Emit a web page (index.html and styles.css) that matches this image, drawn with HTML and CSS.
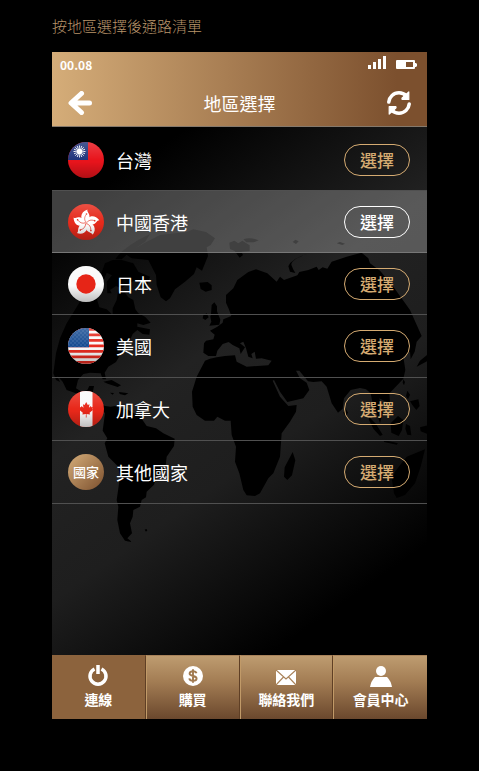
FILE: index.html
```html
<!DOCTYPE html>
<html lang="zh-Hant">
<head>
<meta charset="utf-8">
<meta name="viewport" content="width=device-width, initial-scale=1">
<title>地區選擇</title>
<link rel="stylesheet" href="styles.css">
</head>
<body>
<p class="caption">按地區選擇後通路清單</p>
<div class="phone">
  <header class="header">
    <div class="status">
      <span class="time">00.08</span>
      <svg class="signal" width="19" height="14" viewBox="0 0 19 14" fill="#fff" aria-hidden="true"><path d="M0 9h3v4H0zM5 6h3v7H5zM10 3h3v10h-3zM15 0h3v13h-3z"/></svg>
      <svg class="battery" width="21" height="10" viewBox="0 0 21 10" aria-hidden="true"><path d="M1 0h17q1 0 1 1v2h1l1 1v2l-1 1h-1v1q0 1-1 1H1Q0 9 0 8V1Q0 0 1 0zM10 2v5h7V2z" fill="#fff" fill-rule="evenodd"/></svg>
    </div>
    <div class="titlebar">
      <button class="icon-button" type="button" aria-label="返回">
        <svg width="24" height="24" viewBox="0 0 24 24" fill="none" stroke="#fff" stroke-width="5" stroke-linecap="round" stroke-linejoin="round"><path d="M13.500 2.500L3 12l10.500 9.500M4 12h17.500"/></svg>
      </button>
      <h1>地區選擇</h1>
      <button class="icon-button" type="button" aria-label="重新整理">
        <svg width="24" height="24" viewBox="0 0 24 24" fill="none" stroke="#fff" stroke-width="3.500" stroke-linecap="round"><path d="M1.800 11C2.300 5.800 6.500 1.800 12 1.800c3 0 5.500 1.200 7.500 3.200M22.200 13C21.700 18.200 17.500 22.200 12 22.200c-3 0-5.500-1.200-7.500-3.200"/><path d="M21.800 1v7.500h-6.600q-.8-1.500 1-2.500zM2.200 23v-7.500h6.600q.8 1.500-1 2.500z" fill="#fff" stroke-width="1.200" stroke-linejoin="round"/></svg>
      </button>
    </div>
  </header>

  <main class="content">
    <svg class="map" viewBox="0 0 1125 1584" aria-hidden="true">
      <g transform="translate(-6 249)">
        <path d="M10 490L18 430 30 385 50 340 88 278 115 235 150 200 165 160 188 150 215 150 250 160 265 185 300 200 288 235 260 210 235 220 215 235 198 228 180 240 185 250 172 250 170 215 186 196 170 188 150 240 140 265 148 292 170 298 188 315 188 295 200 270 204 245 225 248 235 262 250 270 256 298 265 310 285 320 302 338 280 345 262 340 262 350 300 358 298 374 278 372 262 360 248 372 236 400 212 432 198 456 175 470 164 488 168 508 158 508 152 490 120 488 100 492 84 510 78 535 95 545 112 540 118 528 132 528 128 548 145 556 150 580 165 588 182 590 195 588 235 600 272 622 290 648 318 655 340 670 374 686 372 708 350 740 346 775 320 800 312 824 290 845 288 862 275 870 270 890 250 900 248 920 240 940 246 970 232 985 246 996 225 992 210 970 202 930 205 890 200 870 210 800 205 770 175 740 164 700 172 685 158 662 165 610 150 590 125 560 95 556 50 540 38 515 22 498 30 516 18 510Z"/>
        <path d="M196 148Q220 110 300 72L285 95 240 125 215 148ZM226 132L285 98 330 75 410 66 430 58 468 66 495 85 482 105 470 112 474 138 456 182 440 172 432 192 405 215 375 238 360 265 348 274 332 262 320 225 318 195 295 150 245 145Z"/>
        <path d="M160 515l25-5 28 16-10 5-30-10zM207 546l28 4-10 6-16-4zM284 959l5-2 3 4-4 4zM180 548l12 1-4 5z"/>
      </g>
      <g transform="translate(384 249)">
        <path d="M75 452Q100 440 165 436L170 455 200 470 265 466 275 452 245 445 228 446 224 425 214 432 218 445 205 440 198 415 190 395 180 400 195 412 182 432 178 415 158 405 146 396 128 402 112 422 108 438 85 438 70 428 72 400 78 392 100 388 104 374 90 362 112 350 128 338 130 328 154 318 146 296 138 278 138 255 160 235 172 210 205 186 228 178 262 190 290 215 300 200 312 210 352 196 358 186 385 180 410 170 416 180 428 172 442 176 455 155 500 140 545 128 565 145 570 160 600 182 640 230 690 300 725 378 710 395 704 425 692 448 690 425 670 440 676 480 670 506 640 538 628 550 630 580 612 572 598 565 608 610 600 640 590 610 580 590 572 550 558 538 540 534 512 540 492 565 488 596 474 608 455 580 440 530 425 514 400 516 384 514 358 482 348 482 360 505 380 518 388 540 370 565 322 576 300 545 282 510 278 512 300 560 325 588 350 585 348 605 330 635 305 670 300 740 280 790 265 805 240 850 225 858 200 856 190 840 178 790 165 755 168 710 155 675 152 632 135 632 112 620 102 632 75 632 50 615 38 590 36 545 50 500Z"/>
        <path d="M95 285l8-8 8 12v15l10 25-3 15-30 3 6-12-3-15 2-8zM70 316l10-6 6 12-10 8-8-5zM58 218l25-2 12 10v14l-18 5-15-8zM148 98l15-6 12 8 12-8 22 14v17l-25 2 5 10-10 8-15-20-14-6zM190 88q20-8 46 3l-15 6h-22zM338 96l8-7 10 5-8 8zM470 100l10-4 15 5-8 4zM382 132q-48 16-48 32 5 15 12 25l-16-4-5-16q10-24 57-37zM338 726l8 25-10 45-14 14-10-10 2-28zM498 598l6 10-8 10-6-10zM710 470l10-18 25-20v20zM670 508l5 8-3 10-4-8zM682 542l8 12-6 14-6-10zM690 574l25-6 4 20-10 12-12-15zM568 622l20 20 20 32-8 4-20-22-14-28zM632 640l22-22 16 12-4 30-10 18-22-10zM678 642l12 6 4 28-12-2-6-18zM612 690l42 10-4 4-38-8zM720 652l22-6v26l-20-8zM735 718L680 740 645 785 636 810 642 850 650 864 675 855 705 820 722 770Z"/>
      </g>
    </svg>

    <svg class="defs" width="0" height="0" aria-hidden="true">
      <defs>
        <clipPath id="round"><circle cx="18" cy="18" r="18"/></clipPath>
        <linearGradient id="gloss" x2="0" y2="1"><stop stop-color="#fff" stop-opacity=".18"/><stop offset=".5" stop-color="#fff" stop-opacity="0"/><stop offset=".55" stop-opacity="0"/><stop offset="1" stop-opacity=".24"/></linearGradient>
      </defs>
    </svg>

    <ul class="regions">
      <li class="region">
        <svg class="flag" viewBox="0 0 36 36" aria-hidden="true"><g clip-path="url(#round)"><path fill="#e8141c" d="M0 0h36v36H0z"/><path fill="#20357c" d="M0 0h20v18H0z"/><path d="M11.500 3.500v12M5.500 9.500h12M7.300 5.300l8.400 8.400M15.700 5.300l-8.400 8.400M9.200 4l4.600 11M13.800 4L9.200 15M6 7.200l11 4.600M17 7.200L6 11.800" stroke="#fff" stroke-width=".9"/><circle cx="11.500" cy="9.500" r="3.400" fill="#fff" stroke="#20357c" stroke-width=".5"/><path fill="url(#gloss)" d="M0 0h36v36H0z"/></g></svg>
        <span class="name">台灣</span><button class="choose" type="button">選擇</button>
      </li>
      <li class="region selected">
        <svg class="flag" viewBox="0 0 36 36" aria-hidden="true"><defs><g id="petal"><path d="M18 18C11.500 15.500 11.500 7 19.500 4.500c-1 2.500 2.700 4 2 8C21 15.500 18.300 15 18 18z" fill="#fff"/><path d="M18 17.500c-2-3-1.600-5.500.2-8" fill="none" stroke="#e32b1c" stroke-width=".6"/><circle cx="18.500" cy="9" r=".8" fill="#e32b1c"/></g></defs><g clip-path="url(#round)"><path fill="#e62a1b" d="M0 0h36v36H0z"/><g transform="translate(0 1)"><use href="#petal"/><use href="#petal" transform="rotate(72 18 18)"/><use href="#petal" transform="rotate(144 18 18)"/><use href="#petal" transform="rotate(216 18 18)"/><use href="#petal" transform="rotate(288 18 18)"/></g><path fill="url(#gloss)" d="M0 0h36v36H0z"/></g></svg>
        <span class="name">中國香港</span><button class="choose" type="button">選擇</button>
      </li>
      <li class="region">
        <svg class="flag" viewBox="0 0 36 36" aria-hidden="true"><g clip-path="url(#round)"><path fill="#fafafa" d="M0 0h36v36H0z"/><path fill="url(#gloss)" d="M0 0h36v36H0z"/><circle cx="18" cy="18" r="9.700" fill="#e62517"/></g></svg>
        <span class="name">日本</span><button class="choose" type="button">選擇</button>
      </li>
      <li class="region">
        <svg class="flag" viewBox="0 0 36 36" aria-hidden="true"><defs><pattern id="stars" width="4" height="4" patternUnits="userSpaceOnUse"><path d="M.5.500h1v1h-1zM2.500 2.500h1v1h-1z" fill="#5f82b5"/></pattern></defs><g clip-path="url(#round)"><path fill="#fafafa" d="M0 0h36v36H0z"/><path d="M0 1.400h36M0 6.900h36M0 12.400h36M0 17.900h36M0 23.400h36M0 28.900h36M0 34.400h36" stroke="#e62b20" stroke-width="2.800"/><path fill="#174c91" d="M0 0h21v19.300H0z"/><path fill="url(#stars)" d="M0 0h21v19H0z"/><path fill="url(#gloss)" d="M0 0h36v36H0z"/></g></svg>
        <span class="name">美國</span><button class="choose" type="button">選擇</button>
      </li>
      <li class="region">
        <svg class="flag" viewBox="0 0 36 36" aria-hidden="true"><g clip-path="url(#round)"><path fill="#e8281a" d="M0 0h36v36H0z"/><path fill="#fafafa" d="M12 0h12.500v36H12z"/><path fill="#e8281a" d="M18.200 11l1.600 3 1.700-.8-.6 3.500 2-1.700.5 1.200 1.600-.2-.7 2.100.9.700-3.600 3 .4 1.600-3.500-.5.100 3.600h-.8l.1-3.600-3.500.5.400-1.600-3.600-3 .9-.7-.7-2.100 1.600.2.500-1.200 2 1.700-.6-3.500 1.700.8z"/><path fill="url(#gloss)" d="M0 0h36v36H0z"/></g></svg>
        <span class="name">加拿大</span><button class="choose" type="button">選擇</button>
      </li>
      <li class="region">
        <span class="flag other">國家</span>
        <span class="name">其他國家</span><button class="choose" type="button">選擇</button>
      </li>
    </ul>
  </main>

  <nav class="tabs">
    <a class="tab active" href="#connect"><svg width="22" height="22" viewBox="0 0 22 22" fill="none" stroke="#fff" stroke-width="3.500" aria-hidden="true"><path d="M7.500 4a8 8 0 1 0 7 0M11 0v9"/></svg><span>連線</span></a>
    <a class="tab" href="#buy"><svg width="22" height="22" viewBox="0 0 22 22" aria-hidden="true"><circle cx="11" cy="11" r="10" fill="#fff"/><path d="M14.500 8.300C14 6.800 12.800 6.300 11 6.300c-2 0-3.400.8-3.400 2.300 0 3.400 7 1.400 7 4.900 0 1.500-1.600 2.300-3.600 2.300s-3.400-.8-3.700-2.400M11 4.200v13.600" fill="none" stroke="#a17a50" stroke-width="1.900"/></svg><span>購買</span></a>
    <a class="tab" href="#contact"><svg width="22" height="22" viewBox="0 0 22 22" aria-hidden="true"><path fill="#fff" d="M1 5h20v15H1z"/><path d="M1 5l10 9 10-9M1 20l7.500-8M21 20l-7.500-8" fill="none" stroke="#a98259" stroke-width="1.100"/></svg><span>聯絡我們</span></a>
    <a class="tab" href="#member"><svg width="22" height="22" viewBox="0 0 22 22" fill="#fff" aria-hidden="true"><circle cx="11" cy="6" r="5"/><path d="M0 22q1-6 5-10h12q4 4 5 10z"/></svg><span>會員中心</span></a>
  </nav>
</div>
</body>
</html>
```

FILE: styles.css
```css
* {
  box-sizing: border-box;
}

body {
  display: flex;
  flex-direction: column;
  min-height: 100vh;
  margin: 0;
  padding: 16px 52px 52px;
  background: #000;
  color: #fff;
  font-family: "Noto Sans CJK TC", "Noto Sans", sans-serif;
}

button {
  font: inherit;
  color: inherit;
  background: none;
  border: 0;
  padding: 0;
  cursor: pointer;
}

svg {
  display: block;
}

.caption {
  margin: 0 0 16px;
  font-size: 15px;
  font-weight: 300;
  line-height: 20px;
  color: #b8946a;
}

.phone {
  display: flex;
  flex: 1;
  flex-direction: column;
}

.header {
  background: linear-gradient(90deg, #d5ad79, #7c502e 92%);
  border-bottom: 1px solid #85796c;
}

.status {
  display: flex;
  align-items: center;
  height: 26px;
  padding: 0 10px 0 8px;
}

.time {
  flex: 1;
  font-size: 12px;
  font-weight: 700;
  line-height: 16px;
}

.signal {
  align-self: flex-start;
  margin: 4px 9px 0 0;
}

.titlebar {
  display: flex;
  align-items: center;
  justify-content: space-between;
  height: 48px;
  padding: 2px 16px 0;
}

h1 {
  margin: 0;
  font-size: 18px;
  font-weight: 400;
  line-height: 22px;
}

.content {
  position: relative;
  flex: 1;
  overflow: hidden;
  background: linear-gradient(145deg, #000 12%, #222 42%, #1e1e1e 60%, #000 86%);
}

.map {
  position: absolute;
  top: 0;
  left: 0;
  width: 100%;
}

.defs {
  position: absolute;
}

.regions {
  position: relative;
  display: grid;
  grid-template-rows: 64px 62px 62px 63px 63px 63px;
  margin: 0;
  padding: 0;
  list-style: none;
}

.region {
  display: flex;
  align-items: center;
  padding: 0 17px 0 16px;
  border-bottom: 1px solid #505050;
}

.region:first-child {
  padding-top: 2px;
}

.selected {
  background: rgba(255, 255, 255, 0.25);
  border-color: #777;
}

.flag {
  width: 36px;
  height: 36px;
  margin-right: 12px;
}

.other {
  border-radius: 50%;
  background: linear-gradient(135deg, #d5ad79, #7c502e);
  font-size: 13px;
  font-weight: 500;
  line-height: 36px;
  text-align: center;
}

.name {
  flex: 1;
  font-size: 18px;
  line-height: 24px;
}

.choose {
  width: 66px;
  height: 32px;
  border: 1px solid #d5ab72;
  border-radius: 16px;
  color: #d5ab72;
  font-size: 17px;
  font-weight: 500;
  line-height: 24px;
}

.selected .choose {
  border-color: #fff;
  color: #fff;
}

.tabs {
  display: grid;
  grid-template-columns: repeat(4, 1fr);
}

.tab {
  display: flex;
  flex-direction: column;
  align-items: center;
  gap: 2px;
  height: 64px;
  padding-top: 9px;
  background: linear-gradient(#be9c70, #a37d54 40%, #6b482d);
  border-top: 1px solid #a8825a;
  border-left: 1px solid #c19a68;
  border-right: 1px solid #5f3f25;
  color: #fff;
  font-size: 14px;
  font-weight: 700;
  line-height: 20px;
  text-decoration: none;
}

.tab:first-child {
  border-left: 0;
}

.tab:last-child {
  border-right: 0;
}

.active {
  background: #8c633d;
  border-top-color: #8c633d;
}
```
